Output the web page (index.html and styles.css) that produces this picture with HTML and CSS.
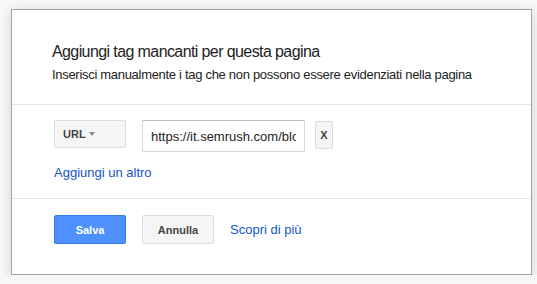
FILE: index.html
```html
<!DOCTYPE html>
<html lang="it">

<head>
  <meta charset="UTF-8">
  <meta name="viewport" content="width=device-width, initial-scale=1.0">
  <title>Aggiungi tag mancanti</title>
  <link rel="stylesheet" href="styles.css">
</head>

<body>
  <div class="dialog">
    <div class="dialog-head">
      <h1 class="title">Aggiungi tag mancanti per questa pagina</h1>
      <p class="subtitle">Inserisci manualmente i tag che non possono essere evidenziati nella pagina</p>
    </div>

    <div class="dialog-body">
      <div class="tag-row">
        <button class="btn select">URL <span class="caret"></span></button>
        <input type="text" class="tag-input" value="https://it.semrush.com/blog/">
        <button class="btn remove">X</button>
      </div>
      <a href="#" class="link add-more">Aggiungi un altro</a>
    </div>

    <div class="dialog-foot">
      <button class="btn primary">Salva</button>
      <button class="btn">Annulla</button>
      <a href="#" class="link">Scopri di più</a>
    </div>
  </div>
</body>

</html>
```

FILE: styles.css
```css
* {
  box-sizing: border-box;
  margin: 0;
}

body {
  background: #f8f8f8;
  font-family: "Liberation Sans", Arial, sans-serif;
  color: #222;
  padding: 9px 0 0 11px;
}

.dialog {
  width: 521px;
  height: 266px;
  background: #fff;
  border: 1px solid #a3a3a3;
  box-shadow: 0 3px 12px rgba(0, 0, 0, 0.16);
}

.dialog-head {
  padding: 32px 10px 0 40px;
  height: 95px;
  border-bottom: 1px solid #e5e5e5;
}

.title {
  font-size: 16px;
  font-weight: normal;
  line-height: 20px;
  letter-spacing: -0.6px;
  color: #222;
}

.subtitle {
  font-size: 13px;
  line-height: 16px;
  letter-spacing: -0.3px;
  margin-top: 5px;
  color: #222;
  white-space: nowrap;
}

.dialog-body {
  padding: 15px 42px 0;
  height: 94px;
  border-bottom: 1px solid #e5e5e5;
}

.tag-row {
  display: flex;
  align-items: flex-start;
}

.btn {
  font-family: inherit;
  font-size: 11px;
  font-weight: bold;
  color: #444;
  background: #f5f5f5;
  border: 1px solid #dcdcdc;
  border-radius: 2px;
  height: 29px;
  width: 72px;
  padding: 0;
  cursor: pointer;
}

.select {
  height: 28px;
  text-align: left;
  padding-left: 8px;
  margin-right: 16px;
}

.caret {
  display: inline-block;
  border-left: 3px solid transparent;
  border-right: 3px solid transparent;
  border-top: 4px solid #888;
  vertical-align: middle;
  margin-left: 1px;
  margin-top: -2px;
}

.tag-input {
  width: 163px;
  height: 32px;
  border: 1px solid #d9d9d9;
  border-top-color: #c0c0c0;
  font-family: inherit;
  font-size: 13px;
  color: #222;
  padding: 0 8px;
  outline: 0;
  margin-right: 10px;
}

.remove {
  width: 18px;
  height: 28px;
  margin-top: 1px;
}

.link {
  font-size: 13px;
  color: #15c;
  text-decoration: none;
}

.add-more {
  display: block;
  line-height: 16px;
  margin-top: 13px;
}

.dialog-foot {
  padding: 16px 42px 0;
  display: flex;
  align-items: center;
  gap: 16px;
}

.primary {
  background: #4d90fe;
  border-color: #3079ed;
  color: #fff;
}
```
